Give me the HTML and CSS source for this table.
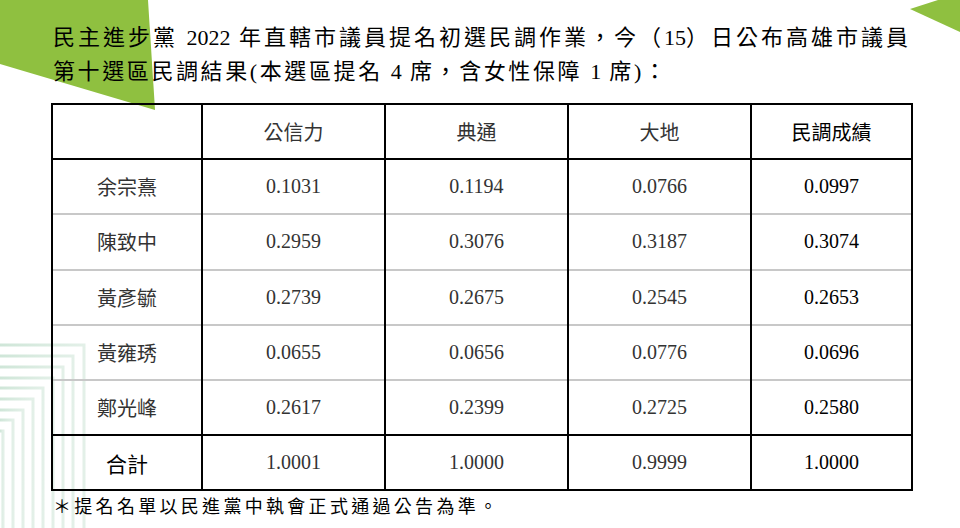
FILE: index.html
```html
<!DOCTYPE html>
<html lang="zh-Hant">
<head>
<meta charset="utf-8">
<title>民調結果</title>
<link rel="stylesheet" href="styles.css">
</head>
<body>
<div class="page">
  <svg class="deco" width="960" height="528" viewBox="0 0 960 528" aria-hidden="true">
    <defs>
      <linearGradient id="fade" x1="0" y1="0" x2="1" y2="0">
        <stop offset="0" stop-color="#cfe6d8"/>
        <stop offset="1" stop-color="#e3f0e8"/>
      </linearGradient>
    </defs>
    <polygon points="0,0 148,0 155,110 0,64" fill="#8fc040"/>
    <polygon points="910,9 938,0 960,0 960,32" fill="#8fc040"/>
    <g fill="none" stroke="url(#fade)" stroke-width="3">
      <path d="M0 345 H84 V528"/>
      <path d="M0 356 H73 V528"/>
      <path d="M0 367 H63 V528"/>
      <path d="M0 378 H53 V528"/>
      <path d="M0 388 H43 V528"/>
      <path d="M0 399 H33 V528"/>
      <path d="M0 410 H23 V528"/>
      <path d="M0 420 H13 V528"/>
      <path d="M0 431 H3 V528"/>
    </g>
  </svg>
  <div class="content">
    <div class="intro">
      <div class="line1">民主進步黨 <span class="n">2022</span> 年直轄市議員提名初選民調作業，今（<span class="n">15</span>）日公布高雄市議員</div>
      <div class="line2">第十選區民調結果(本選區提名 <span class="n">4</span> 席，含女性保障 <span class="n">1</span> 席)：</div>
    </div>
    <table class="results">
      <colgroup>
        <col class="c-name"><col class="c-val"><col class="c-val"><col class="c-val"><col class="c-score">
      </colgroup>
      <thead>
        <tr><th></th><th>公信力</th><th>典通</th><th>大地</th><th class="score">民調成績</th></tr>
      </thead>
      <tbody>
        <tr><td class="name">余宗熹</td><td>0.1031</td><td>0.1194</td><td>0.0766</td><td class="score">0.0997</td></tr>
        <tr><td class="name">陳致中</td><td>0.2959</td><td>0.3076</td><td>0.3187</td><td class="score">0.3074</td></tr>
        <tr><td class="name">黃彥毓</td><td>0.2739</td><td>0.2675</td><td>0.2545</td><td class="score">0.2653</td></tr>
        <tr><td class="name">黃雍琇</td><td>0.0655</td><td>0.0656</td><td>0.0776</td><td class="score">0.0696</td></tr>
        <tr><td class="name">鄭光峰</td><td>0.2617</td><td>0.2399</td><td>0.2725</td><td class="score">0.2580</td></tr>
      </tbody>
      <tfoot>
        <tr><td class="name total">合計</td><td>1.0001</td><td>1.0000</td><td>0.9999</td><td class="score">1.0000</td></tr>
      </tfoot>
    </table>
    <p class="note">＊提名名單以民進黨中執會正式通過公告為準。</p>
  </div>
</div>
</body>
</html>
```

FILE: styles.css
```css
html, body {
  margin: 0;
  padding: 0;
  background: #ffffff;
}

.page {
  position: relative;
  width: 960px;
  height: 528px;
  overflow: hidden;
  background: #ffffff;
  font-family: "Liberation Serif", "Noto Sans CJK TC", serif;
}

.deco {
  position: absolute;
  left: 0;
  top: 0;
  z-index: 0;
}

.content {
  position: relative;
  z-index: 1;
  display: flex;
  flex-direction: column;
  padding: 21px 0 0 53px;
}

.intro {
  width: 858px;
  font-size: 22px;
  line-height: 34px;
  color: #000;
  letter-spacing: 3px;
}

.line1 {
  text-align: justify;
  text-align-last: justify;
  white-space: nowrap;
}

.line2 {
  white-space: nowrap;
  letter-spacing: 2.6px;
}

.n {
  letter-spacing: 0;
}

.results {
  margin: 14px 0 0 -2px;
  width: 860px;
  border-collapse: collapse;
  table-layout: fixed;
  font-size: 20px;
  color: #333;
  border: 2px solid #000;
}

.c-name { width: 150px; }
.c-val { width: 183px; }
.c-score { width: 161px; }

.results th,
.results td {
  height: 53.2px;
  padding: 0;
  text-align: center;
  vertical-align: middle;
  font-weight: 400;
  border-left: 2px solid #000;
  border-right: 2px solid #000;
}

.results thead th {
  border-bottom: 2px solid #000;
}

.results tbody tr + tr td {
  border-top: 2px solid #c8c8c8;
}

.results tfoot td {
  border-top: 2px solid #000;
}

.results .score {
  color: #000;
}

.results .total {
  color: #000;
  font-size: 21px;
}

.note {
  margin: 2px 0 0 0;
  font-size: 18px;
  line-height: 28px;
  letter-spacing: 3.3px;
  color: #000;
}
```
